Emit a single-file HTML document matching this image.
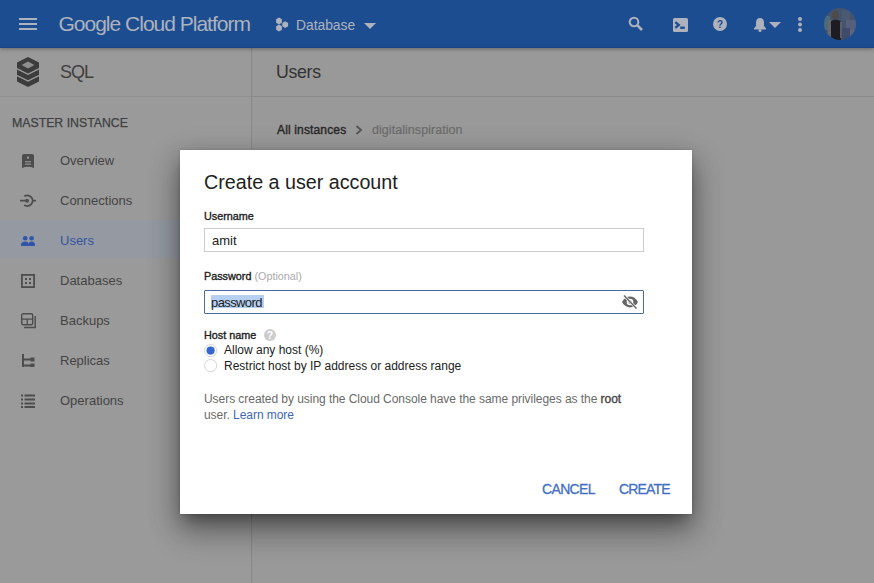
<!DOCTYPE html>
<html><head><meta charset="utf-8">
<style>
*{margin:0;padding:0;box-sizing:border-box}
html,body{width:874px;height:583px;overflow:hidden;background:#999;font-family:"Liberation Sans",sans-serif}
.abs{position:absolute}
#hdr{position:absolute;left:0;top:0;width:874px;height:48px;background:#1d4d91;z-index:2;box-shadow:0 1px 4px rgba(0,0,0,.35);border-bottom:1px solid #1a4586}
#side{position:absolute;left:0;top:48px;width:251px;height:535px;background:#9a9a9a}
#vline{position:absolute;left:251px;top:48px;width:1px;height:535px;background:#888}
.hline{position:absolute;height:1px;background:#8a8a8a}
.t{position:absolute;white-space:nowrap;line-height:1}
#dlg{position:absolute;left:180px;top:150px;width:512px;height:364px;background:#fff;box-shadow:0 10px 14px -6px rgba(0,0,0,.3),0 20px 30px 0 rgba(0,0,0,.22),0 9px 26px 3px rgba(0,0,0,.25),0 0 3px rgba(0,0,0,.15)}
.navt{font-size:13px;color:#444}
.ico{position:absolute}
</style></head><body>
<div id="hdr">
  <!-- hamburger -->
  <div class="abs" style="left:19px;top:18px;width:18px;height:2px;background:#adb2bc"></div>
  <div class="abs" style="left:19px;top:23px;width:18px;height:2px;background:#adb2bc"></div>
  <div class="abs" style="left:19px;top:28px;width:18px;height:2px;background:#adb2bc"></div>
  <div class="t" style="left:58.5px;top:13px;font-size:21px;letter-spacing:-1.0px;color:#adb2bc">Google Cloud Platform</div>
  <!-- hex icon -->
  <svg class="ico" style="left:275px;top:16.5px" width="14" height="15" viewBox="0 0 14 15">
    <path d="M4 0.6L6.9 2.3V5.7L4 7.4L1.1 5.7V2.3Z" fill="#adb2bc"/><path d="M10.2 4.2L13.1 5.9V9.3L10.2 11L7.3 9.3V5.9Z" fill="#adb2bc"/><path d="M4 7.6L6.9 9.3V12.7L4 14.4L1.1 12.7V9.3Z" fill="#adb2bc"/>
  </svg>
  <div class="t" style="left:296px;top:19px;font-size:13.8px;color:#adb2bc">Database</div>
  <svg class="ico" style="left:364px;top:23px" width="12" height="6" viewBox="0 0 12 6"><path d="M0 0H12L6 6Z" fill="#adb2bc"/></svg>
  <!-- search -->
  <svg class="ico" style="left:628px;top:16px" width="16" height="16" viewBox="0 0 16 16">
    <circle cx="6" cy="6" r="4.3" fill="none" stroke="#adb2bc" stroke-width="2.1"/><path d="M9.2 9.2L14 14" stroke="#adb2bc" stroke-width="2.6"/>
  </svg>
  <!-- terminal -->
  <svg class="ico" style="left:673px;top:18px" width="15" height="14" viewBox="0 0 15 14">
    <rect x="0" y="0" width="15" height="14" rx="1.5" fill="#adb2bc"/><path d="M2.3 4.2L5.8 7L2.3 9.8" stroke="#1d4d91" stroke-width="2.3" fill="none"/><rect x="7.2" y="8.6" width="4.6" height="2.3" fill="#1d4d91"/>
  </svg>
  <!-- help -->
  <svg class="ico" style="left:713px;top:17px" width="14" height="14" viewBox="0 0 14 14">
    <circle cx="7" cy="7" r="7" fill="#adb2bc"/><text x="7" y="11" text-anchor="middle" font-family="Liberation Sans" font-weight="bold" font-size="10" fill="#1d4d91">?</text>
  </svg>
  <!-- bell -->
  <svg class="ico" style="left:753px;top:17px" width="14" height="15" viewBox="0 0 14 15">
    <path d="M7 1C4.5 1 3 3 3 5.5V9L1 11.5V12.5H13V11.5L11 9V5.5C11 3 9.5 1 7 1Z" fill="#adb2bc"/><circle cx="7" cy="13.5" r="1.5" fill="#adb2bc"/>
  </svg>
  <svg class="ico" style="left:769px;top:22px" width="12" height="6" viewBox="0 0 12 6"><path d="M0 0H12L6 6Z" fill="#adb2bc"/></svg>
  <!-- dots -->
  <svg class="ico" style="left:798px;top:17px" width="4" height="15" viewBox="0 0 4 15">
    <circle cx="2" cy="2" r="2" fill="#adb2bc"/><circle cx="2" cy="7.5" r="2" fill="#adb2bc"/><circle cx="2" cy="13" r="2" fill="#adb2bc"/>
  </svg>
  <!-- avatar -->
  <svg class="ico" style="left:824px;top:8px" width="32" height="32" viewBox="0 0 32 32">
    <defs><clipPath id="av"><circle cx="16" cy="16" r="16"/></clipPath>
    <filter id="bl" x="-10%" y="-10%" width="120%" height="120%"><feGaussianBlur stdDeviation="0.6"/></filter></defs>
    <g clip-path="url(#av)"><g filter="url(#bl)">
      <rect x="0" y="0" width="32" height="32" fill="#44526c"/>
      <rect x="0" y="8" width="6" height="14" fill="#4c6a7a"/>
      <rect x="18" y="2" width="8" height="10" fill="#4c5a72"/>
      <rect x="22" y="12" width="10" height="10" fill="#56607a"/>
      <rect x="18" y="20" width="8" height="12" fill="#3f4c6c"/>
      <rect x="26" y="22" width="6" height="8" fill="#62667a"/>
      <rect x="2" y="24" width="8" height="8" fill="#505c6a"/>
      <rect x="4" y="12" width="4" height="18" fill="#67686e"/>
      <ellipse cx="11.5" cy="7" rx="3.2" ry="4.3" fill="#4f4847"/>
      <path d="M7 13Q11.5 10.5 16.5 13L17 32H7Z" fill="#1e1f22"/>
      <rect x="16" y="14" width="2" height="16" fill="#5c5e68"/>
    </g></g>
  </svg>
</div>

<div id="side">
  <!-- SQL icon -->
  <svg class="ico" style="left:17px;top:8.8px" width="22" height="30" viewBox="0 0 22 30">
    <path d="M11 0L22 5.5V11L11 16.5L0 11V5.5Z" fill="#3c3c3c"/><path d="M11 4.6L17.4 8L11 11.4L4.6 8Z" fill="#8f8f8f"/>
    <path d="M0 12.6L11 18.1L22 12.6V17.8L11 23.3L0 17.8Z" fill="#3c3c3c"/>
    <path d="M0 19.3L11 24.8L22 19.3V24.5L11 30L0 24.5Z" fill="#3c3c3c"/>
  </svg>
  <div class="t" style="left:60px;top:15px;font-size:18px;letter-spacing:-1px;color:#404040">SQL</div>
</div>
<div class="hline" style="left:0;top:96px;width:251px;background:#909090"></div>
<div id="vline"></div>
<div class="hline" style="left:252px;top:96px;width:622px"></div>
<div class="t" style="left:276px;top:64px;font-size:17.7px;letter-spacing:-0.3px;color:#333">Users</div>

<div class="t" style="left:12px;top:117px;font-size:12.3px;-webkit-text-stroke:0.25px #404040;color:#404040">MASTER INSTANCE</div>

<div class="abs" style="left:0;top:220px;width:251px;height:38px;background:#959aa2"></div>
<div class="t navt" style="left:60px;top:153.5px">Overview</div>
<div class="t navt" style="left:60px;top:193.5px">Connections</div>
<div class="t navt" style="left:60px;top:233.5px;color:#3653a0">Users</div>
<div class="t navt" style="left:60px;top:273.5px">Databases</div>
<div class="t navt" style="left:60px;top:313.5px">Backups</div>
<div class="t navt" style="left:60px;top:353.5px">Replicas</div>
<div class="t navt" style="left:60px;top:393.5px">Operations</div>

<!-- nav icons -->
<svg class="ico" style="left:22px;top:154px" width="12" height="14" viewBox="0 0 12 14">
  <path d="M2 0H10Q12 0 12 2V14Q6 11.5 0 14V2Q0 0 2 0Z" fill="#4d4d4d"/><rect x="5" y="2.6" width="2" height="2" fill="#9a9a9a"/><rect x="3" y="7.2" width="6" height="1.1" fill="#9a9a9a"/><rect x="3" y="9.6" width="6" height="1.1" fill="#9a9a9a"/>
</svg>
<svg class="ico" style="left:20px;top:194px" width="16" height="13" viewBox="0 0 16 13">
  <path d="M0 6.7H5M12 6.7H16" stroke="#4d4d4d" stroke-width="1.8"/><path d="M4.3 2.3A5.3 5.3 0 1 1 4.3 11.1" fill="none" stroke="#4d4d4d" stroke-width="1.8"/><circle cx="7" cy="6.7" r="2" fill="#4d4d4d"/>
</svg>
<svg class="ico" style="left:21px;top:235.5px" width="14" height="10.5" viewBox="0 0 14 10.5">
  <circle cx="4.2" cy="2.3" r="2.3" fill="#2f54a8"/><circle cx="10.6" cy="2.3" r="2.3" fill="#2f54a8"/><path d="M0 10.5V9C0 6.5 2.2 5.6 4.2 5.6S8 6.5 8 9V10.5Z" fill="#2f54a8"/><path d="M7.6 10.5V9C7.6 6.5 9 5.6 10.6 5.6S14 6.5 14 9V10.5Z" fill="#2f54a8"/>
</svg>
<svg class="ico" style="left:21px;top:274px" width="14" height="14" viewBox="0 0 14 14">
  <rect x="0.9" y="0.9" width="12.2" height="12.2" fill="none" stroke="#4d4d4d" stroke-width="1.8"/><rect x="4" y="4" width="2" height="2" fill="#4d4d4d"/><rect x="8" y="4" width="2" height="2" fill="#4d4d4d"/><rect x="4" y="8" width="2" height="2" fill="#4d4d4d"/><rect x="8" y="8" width="2" height="2" fill="#4d4d4d"/>
</svg>
<svg class="ico" style="left:21px;top:313px" width="15" height="16" viewBox="0 0 15 16">
  <rect x="0.7" y="0.7" width="11" height="11" rx="1.5" fill="none" stroke="#4d4d4d" stroke-width="1.4"/><path d="M0.7 6.2H11.7M6.2 6.2V11.7" stroke="#4d4d4d" stroke-width="1.3"/><path d="M14.2 3V14.5H3" fill="none" stroke="#4d4d4d" stroke-width="1.4"/>
</svg>
<svg class="ico" style="left:22px;top:354px" width="13" height="13" viewBox="0 0 13 13">
  <path d="M1 0V13M1 5.5H9M1 11.5H9" stroke="#4d4d4d" stroke-width="2"/><rect x="8.5" y="3.5" width="4" height="4" fill="#4d4d4d"/><rect x="8.5" y="9.5" width="4" height="3.5" fill="#4d4d4d"/>
</svg>
<svg class="ico" style="left:21px;top:394px" width="14" height="14" viewBox="0 0 14 14">
  <rect x="0" y="0.5" width="2" height="2" fill="#4d4d4d"/><rect x="0" y="4.5" width="2" height="2" fill="#4d4d4d"/><rect x="0" y="8.5" width="2" height="2" fill="#4d4d4d"/><rect x="0" y="12" width="2" height="2" fill="#4d4d4d"/>
  <rect x="3.5" y="0.5" width="10.5" height="2" fill="#4d4d4d"/><rect x="3.5" y="4.5" width="10.5" height="2" fill="#4d4d4d"/><rect x="3.5" y="8.5" width="10.5" height="2" fill="#4d4d4d"/><rect x="3.5" y="12" width="10.5" height="2" fill="#4d4d4d"/>
</svg>

<!-- breadcrumb -->
<div class="t" style="left:277px;top:124px;font-size:12px;letter-spacing:0.15px;-webkit-text-stroke:0.4px #2a2a2a;color:#2a2a2a">All instances</div>
<svg class="ico" style="left:355px;top:125px" width="8" height="10" viewBox="0 0 8 10"><path d="M1.5 1L6 5L1.5 9" fill="none" stroke="#555" stroke-width="1.8"/></svg>
<div class="t" style="left:372px;top:124px;font-size:12.5px;letter-spacing:0.05px;-webkit-text-stroke:0.2px #6c6c6c;color:#6c6c6c">digitalinspiration</div>

<!-- dialog -->
<div id="dlg">
  <div class="t" style="left:24px;top:23px;font-size:19.7px;color:#212121">Create a user account</div>
  <div class="t" style="left:24px;top:61px;font-size:10.8px;-webkit-text-stroke:0.35px #212121;color:#212121">Username</div>
  <div class="abs" style="left:24px;top:78px;width:440px;height:24px;border:1px solid #ccc"></div>
  <div class="t" style="left:32px;top:84px;font-size:13px;color:#212121">amit</div>
  <div class="t" style="left:24px;top:121px;font-size:10.8px;color:#212121"><span style="-webkit-text-stroke:0.35px #212121">Password</span> <span style="color:#aaa">(Optional)</span></div>
  <div class="abs" style="left:24px;top:140px;width:440px;height:24px;border:1px solid #4b68aa;border-radius:1px"></div>
  <div class="abs" style="left:31px;top:145px;width:53px;height:13px;background:#b5d0f3"></div>
  <div class="t" style="left:31px;top:146px;font-size:13px;letter-spacing:-0.6px;color:#212121">password</div>
  <!-- eye off -->
  <svg class="ico" style="left:441px;top:145px" width="18" height="14" viewBox="0 0 18 14">
    <path d="M1 7C3 3.2 6 1.6 9 1.6S15 3.2 17 7C15 10.8 12 12.4 9 12.4S3 10.8 1 7Z" fill="#666"/><circle cx="9" cy="7" r="3.3" fill="#fff"/><circle cx="9" cy="7" r="1.7" fill="#666"/><path d="M3 0.5L15.5 13.5" stroke="#fff" stroke-width="2.6"/><path d="M3 0.5L15.5 13.5" stroke="#616161" stroke-width="1.3"/>
  </svg>
  <div class="t" style="left:24px;top:179.5px;font-size:10.8px;-webkit-text-stroke:0.35px #212121;color:#212121">Host name</div>
  <svg class="ico" style="left:84px;top:179px" width="12" height="12" viewBox="0 0 12 12"><circle cx="6" cy="6" r="6" fill="#ccc"/><text x="6" y="10" text-anchor="middle" font-family="Liberation Sans" font-weight="bold" font-size="10.5" fill="#fff">?</text></svg>
  <svg class="ico" style="left:24px;top:193.5px" width="14" height="14" viewBox="0 0 14 14"><circle cx="6.6" cy="6.6" r="6.1" fill="#fff" stroke="#d6d6d6" stroke-width="1"/><circle cx="6.6" cy="6.6" r="4.1" fill="#3664d0"/></svg>
  <div class="t" style="left:44px;top:194.3px;font-size:12px;color:#212121">Allow any host (%)</div>
  <svg class="ico" style="left:24px;top:209px" width="14" height="14" viewBox="0 0 14 14"><circle cx="6.6" cy="6.6" r="6.1" fill="#fff" stroke="#d6d6d6" stroke-width="1"/></svg>
  <div class="t" style="left:44px;top:210px;font-size:12px;color:#212121">Restrict host by IP address or address range</div>
  <div class="t" style="left:24px;top:241px;font-size:12px;letter-spacing:-0.05px;color:#6a6a6a;line-height:16px">Users created by using the Cloud Console have the same privileges as the <span style="color:#444;-webkit-text-stroke:0.35px #444">root</span><br>user. <span style="color:#3d68b8">Learn more</span></div>
  <div class="t" style="left:362px;top:331.5px;font-size:14px;letter-spacing:-0.65px;-webkit-text-stroke:0.3px #4270c4;color:#4270c4">CANCEL</div>
  <div class="t" style="left:439px;top:331.5px;font-size:14px;letter-spacing:-0.85px;-webkit-text-stroke:0.3px #4270c4;color:#4270c4">CREATE</div>
</div>
</body></html>
